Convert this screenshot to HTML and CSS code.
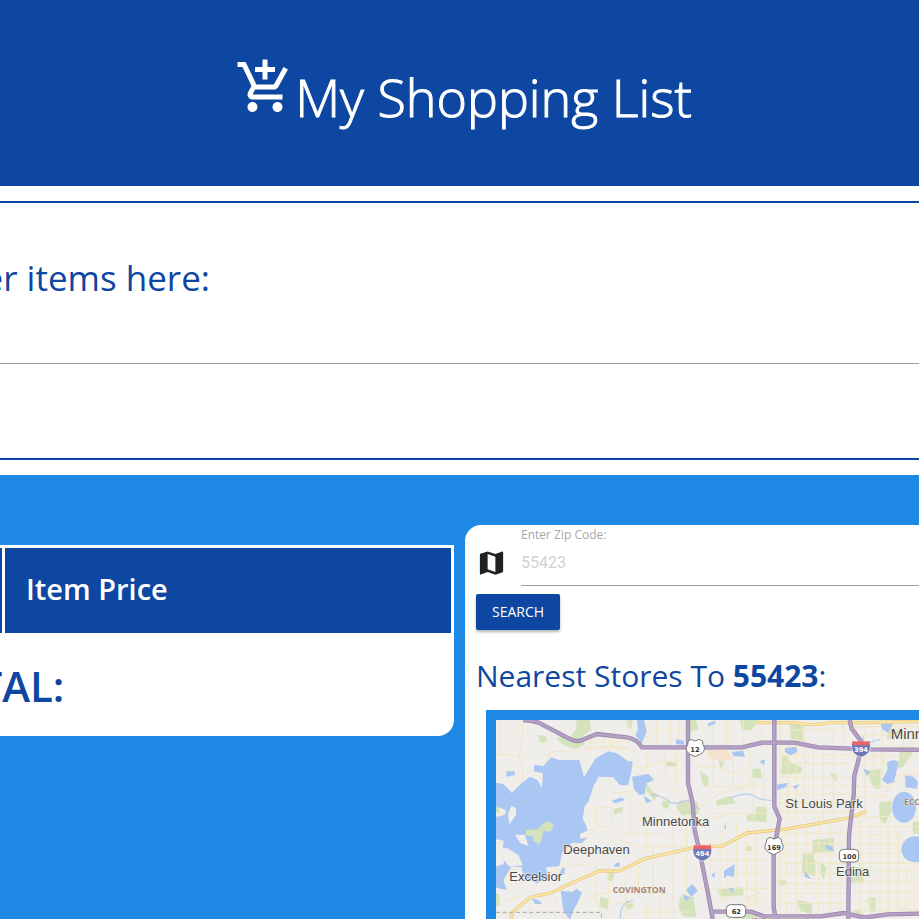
FILE: index.html
```html
<!DOCTYPE html>
<html lang="en">
<head>
<meta charset="utf-8">
<meta name="viewport" content="width=device-width, initial-scale=1">
<title>My Shopping List</title>
<link rel="stylesheet" href="styles.css">
</head>
<body>
<header class="banner">
  <svg class="cart" viewBox="0 0 24 24" aria-hidden="true"><path d="M11 9h2V6h3V4h-3V1h-2v3H8v2h3v3zm-4 9c-1.1 0-1.99.9-1.99 2S5.9 22 7 22s2-.9 2-2-.9-2-2-2zm10 0c-1.1 0-1.99.9-1.99 2s.89 2 1.99 2 2-.9 2-2-.9-2-2-2zm-9.83-3.25l.03-.12.9-1.63h7.45c.75 0 1.41-.41 1.75-1.03l3.86-7.01L19.42 4h-.01l-1.1 2-2.76 5H8.53l-.13-.27L6.16 6l-.95-2-.94-2H1v2h2l3.6 7.59-1.35 2.45c-.16.28-.25.61-.25.96 0 1.1.9 2 2 2h12v-2H7.42c-.13 0-.25-.11-.25-.25z"/></svg>
  <h1>My Shopping List</h1>
</header>
<section class="entry">
  <label class="entry-label" for="item"><span>Enter items here:</span></label>
  <input class="line-input" id="item" type="text">
</section>
<main class="content">
  <section class="list">
    <table>
      <thead><tr><th scope="col">Item Name</th><th scope="col">Item Price</th></tr></thead>
      <tbody><tr><td colspan="2">TOTAL:</td></tr></tbody>
    </table>
  </section>
  <section class="stores">
    <form class="zip">
      <svg class="map-icon" viewBox="0 0 24 24" aria-hidden="true"><path d="M20.5 3l-.16.03L15 5.1 9 3 3.36 4.9c-.21.07-.36.25-.36.48V20.5c0 .28.22.5.5.5l.16-.03L9 18.9l6 2.1 5.64-1.9c.21-.07.36-.25.36-.48V3.5c0-.28-.22-.5-.5-.5zM15 19l-6-2.11V5l6 2.11V19z"/></svg>
      <div class="zip-field">
        <label for="zip">Enter Zip Code:</label>
        <input class="line-input" id="zip" type="text" placeholder="55423">
      </div>
      <button type="button">SEARCH</button>
    </form>
    <h2>Nearest Stores To <b>55423</b>:</h2>
    <div class="map">
      <svg viewBox="48 60 1269 597" preserveAspectRatio="xMinYMin slice" role="img" aria-label="Map of nearby stores">
        <rect class="land" x="48" y="60" width="1269" height="597"/>
        <g class="park">
          <path d="M290 60h40l4 30-26 18 6 26-30 14-34-14-20-16 16-14 24 8 18-24zM172 104l26 4 2 18-18 4zM600 300l54 6 2 36-50 4-18-26zM500 250l14 20 20 14-10 18-26-30zM548 302h24l-8 26-18-8zM560 184l28 4v12l-30-2zM400 328l28-8v16l-26 8zM600 590l40 0 8 60h-40l-12-30zM440 600l22 16-14 14-14-10zM362 590l24 8-4 30-24-10zM384 515l18 6-4 24-16-6zM48 580l10 4v34H48zM48 310l10 6v26l-10-6zM618 60h30l8 26-30 14zM532 558l26 18-10 8zM438 60h20l-4 30-14-12z"/>
          <path d="M930 70h40l0 54-38-8zM906 172l16-8 8 20 38 20-4 16-60 4zM800 346l26-4 2-22 32 0v46l-60-2zM998 420l64-6 0 42-64 2zM968 458h32l6 34 0 36-40-8zM1024 486l16 18-10 36-10-22zM1110 502h40l0 48-40 0zM1160 214l42-8 0 60-20 0zM1197 306l36-4 2 30-20 40-16-14zM1164 590l24 4-2 44-18-6zM950 600l46 8 0 34-34-8zM710 568l80-6 0 24-70 4zM710 300l40-12 20 22-60 8zM715 176l20 14-14 16zM660 212l26 20-2 32-16-10zM816 206l26 0 4 30-30-4zM780 60h56l-20 30-30 0zM1260 140l50 0-40 60-16 6zM1228 80l30 14-18 26-20-6zM1050 220l16 0 6 24-14-6zM760 640l40-14 40 30-80 0zM1085 646l50-16 36 26zM894 538l26 6-6 12-18-2zM796 438l18 0 0 16-18-2zM1298 365h19v36h-19z"/>
        </g>
        <path class="urban" d="M680 140l60 10 20 28-34 6-44-12z"/>
        <g class="minor">
          <path d="M48 165h76M60 60v106M128 60v60l-12 46 12 30v50M85 105l30-14M196 188l16-32 60-4 60-6 60-8 70 14M330 108v42M348 108v38M370 108v40M392 108v40M415 110v46M320 126h130M320 142h120M350 322h44v58h-44zM396 280l60-6 60 6 50 20M450 278v124M480 300v66M500 350v108M520 440v142M455 400h90M560 440h100M580 350v260M620 340v250M640 180h-80l-60 20M500 160v46M555 150v70M590 150v100M530 60v80M570 60v80M600 60l-4 80M510 90h110M60 340l40 10 0 70M48 430l50-10M300 440l50-60M200 520l60-20 80-10M340 515l50-90 60-30M345 520v80l30 50M385 500l0 120M400 610h60M440 570v87M475 470v110M330 590l80-20 160 14M470 636h150M500 610v47M540 590v67M580 580v77M225 590v67M60 610l60-20M150 600v57M48 640h46M60 560l40-50 60-20M420 420l60 20 100 0M440 60l12 34 60 20"/>
          <path d="M480 200l30 30 50 30 50 30 30 50M440 200h60M648 200h60l50 20 40-12M670 260h90l80-6M660 320l60-40 80-20M700 60v200M740 60v120M760 160v140M790 60v90M810 150v120M820 210v180M846 60v80M850 200v110M680 340h180M660 360l80-14M720 380v220M744 450v110M690 410v110M770 370v180M800 380v260M830 390v240M680 480h180M700 520h150M660 565h210M716 600l40-10 20-40M800 560l40 20-40 14 50 10-40 10M900 60v590M925 130v230M950 100v260M975 60v300M1000 120v240M1030 140v220M1060 80v280M1090 60v90M910 90h200M900 165h220M900 190h210M900 232h220M900 258h210M900 282h210M900 310h210M900 336h210M920 380v260M950 370v280M980 370v200M1016 340v300M1050 350v300M1080 350v290M900 400h210M900 430h200M900 462h200M900 490h210M900 520h200M900 550h200M900 580h210M900 610h220"/>
          <path d="M1130 60v60M1155 60v300M1180 60v160M1206 60v160M1238 60v80M1270 60v80M1295 60v80M1120 80h197M1120 105h197M1120 170h190M1120 195h100M1116 225h200M1116 260h120M1116 290h120M1116 350h201M1116 380h201M1116 405h150M1116 430h150M1120 460h140M1120 490h197M1120 515h197M1120 545h197M1120 575h197M1120 605h197M1120 630h197M1140 360v280M1170 360v280M1200 360v280M1225 370v270M1255 400v240M1280 490v140M1305 490v140M1240 390l77 80M1180 310l60-60 77-40M1155 150l90 50 72 70"/>
        </g>
        <g class="water">
          <path d="M190 198l24-26 24 8 60 0 14 52 34-56 38-22 26 6 34 24 14 0-4 32-10 40-24 0-20-24-44-2-16 30-10 40-16 18-6 38 10 20 8 30-20 24-30-2-30 30-8 40-40 4 6 30-34 18-40-20-6-30-30 0-24 40 10 30-40-8-20-24 12-34 40-12-6-44 14-60-6-40 12-60 40-40 24-18 22 10 14 24z"/>
          <path d="M48 248l22 4 24 24 2 40-18 14-30-10zM48 350l30-6 20 10 0 26-20 44-30-6zM80 214h24v12l-26 4zM162 194l28 4v22l-28-6zM470 60h22l8 34-14 36-20-24 8-20zM456 230l50-8 16 18-22 10-6 32-16 4-16-20zM395 302l30-10 10 8-30 10zM490 286l26 18-18 6zM588 118l24 4v12l-24-2zM636 552l18 20-20 18-16-20zM606 582l26 10-14 12zM242 572l34 4 14-10 16 12-16 36-10 16-10 30-20-28zM154 596l22 4 10 12-20 0zM410 488l10 0-2 14-18-4zM246 504l8 0v18h-16z"/>
          <path d="M684 70l20-8 4 8-22 10zM755 156l34-4 6 18-34-2zM838 184l18-6-4 18zM916 144l32-4 4 16-20 10-18-10zM890 254l34-6-6 14-26 8zM938 260l20-8-10 16zM732 384l6-18 0 22zM732 512l32-20-2 40-20-6-10 10zM694 524l10-8 0 20zM745 565l16 0 0 14zM974 512l20 26-20-8zM1038 434l20 6 0 14-20-8zM1150 206l20 8-10 14zM1202 70l36 2-14 26-18-10zM1222 186l20-6 14 6-14 60-20 6-16-12 16-30zM1276 226l24 4 14 16-4 20-34-4z"/>
          <ellipse cx="1272" cy="322" rx="36" ry="46"/><ellipse cx="1306" cy="448" rx="42" ry="39"/>
        </g>
        <path class="stream" d="M512 282q40 8 54 22t60-4l34 30M750 295q50-22 70-8t54 14M460 602q-40 0-40 55M1150 110q-10 30 50 8"/>
        <g class="land">
          <path d="M358 236l20 8 10-6 6 14-14 12-20 6-26 50-8-18 16-46zM104 404l30 0 12 34-24-8zM300 402l30-14 0 22-30 6zM94 318l14 6 0 20-20 30-4-32zM62 440l24 6 30 20 12 30-40 4-20-24z"/>
        </g>
        <path class="park" d="M138 390l36-2 16-18 20-6 12 14-12 18-20-4-4 22-8 20-16-10-4-14-20-4z"/>
        <path class="yellow-edge" d="M94 657l4-20 50-44 70-16 70-34 70-30 60 0 80-38 162-36h66l74-40 120-12 180-32 60-20M830 68h110q60 12 110 0h110l157-4"/>
        <path class="yellow" d="M94 657l4-20 50-44 70-16 70-34 70-30 60 0 80-38 162-36h66l74-40 120-12 180-32 60-20M830 68h110q60 12 110 0h110l157-4"/>
        <path class="highway-edge" d="M130 60q30 2 50 10l92 48q20 10 40 0l38-16 90 10q30 4 46 30h300l60-14h98l70 14 160 6 153 2M624 60v190q10 40 14 60l6 80 16 70 24 120 14 77M883 60v260l16 36-10 54-8 30v180l6 37M1109 60l6 26 30 40q-4 40-22 100l-2 60-14 120-2 251M690 635h122l40 14h170l70-10 60 14 70-10 95-2"/>
        <path class="highway" d="M130 60q30 2 50 10l92 48q20 10 40 0l38-16 90 10q30 4 46 30h300l60-14h98l70 14 160 6 153 2M624 60v190q10 40 14 60l6 80 16 70 24 120 14 77M883 60v260l16 36-10 54-8 30v180l6 37M1109 60l6 26 30 40q-4 40-22 100l-2 60-14 120-2 251M690 635h122l40 14h170l70-10 60 14 70-10 95-2"/>
        <path class="boundary" d="M48 637h316v20"/>
        <g class="shield">
          <path d="M624 124l10-6 12 5 12-5 10 6q-1 10 5 18 2 14-12 20l-16 8-16-8q-14-8-10-20 6-8 5-18z"/>
          <path d="M860 418l10-6 12 5 12-5 10 6q-1 10 5 18 2 14-12 20l-16 8-16-8q-14-8-10-20 6-8 5-18z"/>
          <rect x="1078" y="448" width="58" height="38" rx="12"/>
          <rect x="739" y="614" width="58" height="38" rx="12"/>
        </g>
        <g class="interstate"><path d="M1118 124q26 6 50 0 6 14 2 26-6 16-27 22-21-6-27-22-4-12 2-26zM642 436q26 6 50 0 6 14 2 26-6 16-27 22-21-6-27-22-4-12 2-26z"/></g>
        <path class="interstate-top" d="M1118 122q10 4 14 2h22q4 2 14-2l2 13h-54zM642 434q10 4 14 2h22q4 2 14-2l2 13h-54z"/>
        <g class="route"><text x="645" y="156">12</text><text x="882" y="450">169</text><text x="1108" y="476">100</text><text x="769" y="642">62</text></g>
        <g class="route light"><text x="1143" y="157">394</text><text x="667" y="468">494</text></g>
        <g class="town"><text x="88" y="543">Excelsior</text><text x="250" y="462">Deephaven</text><text x="486" y="378">Minnetonka</text><text x="916" y="324">St Louis Park</text><text x="1068" y="528">Edina</text><text class="city" x="1232" y="117">Minneapolis</text></g>
        <g class="district"><text x="398" y="578">COVINGTON</text><text x="1272" y="314">ECCO</text><text x="814" y="672">INDIAN HILLS</text></g>
      </svg>
    </div>
  </section>
</main>
</body>
</html>
```
FILE: styles.css
```css
* { box-sizing: border-box; }
body {
  margin: 0;
  min-height: 100vh;
  display: flex;
  flex-direction: column;
  overflow: hidden;
  background: #fff;
  color: #0d47a1;
  font-family: "Open Sans", "Noto Sans", sans-serif;
}
h1, h2 { margin: 0; }
.banner {
  display: flex;
  justify-content: center;
  align-items: flex-start;
  padding: 57px 0 49px 8px;
  background: #0d47a1;
  color: #fff;
}
.cart { width: 60px; height: 60px; fill: #fff; }
.banner h1 {
  font-size: 52px;
  font-weight: 300;
  line-height: 80px;
  -webkit-text-stroke: 1px #fff;
}
.entry {
  margin: 15px 0;
  padding: 50px 0 94px;
  border: solid #0d47a1;
  border-width: 2px 0;
}
.entry-label {
  display: flex;
  justify-content: flex-end;
  width: 210px;
  font-size: 35px;
  line-height: 50px;
  white-space: nowrap;
}
.line-input {
  display: block;
  width: 100%;
  padding: 0;
  border: 0;
  border-bottom: 1px solid #9e9e9e;
  outline: 0;
  background: transparent;
  font: 16px Roboto, sans-serif;
}
.entry .line-input { height: 61px; }
.content {
  flex: 1;
  display: flex;
  align-items: flex-start;
  gap: 11px;
  padding-top: 50px;
  background: #1e88e5;
}
.list {
  flex: 0 0 454px;
  display: flex;
  justify-content: flex-end;
  margin-top: 20px;
  overflow: hidden;
  border-radius: 0 0 16px 0;
}
table {
  flex: none;
  width: 938px;
  table-layout: fixed;
  border-collapse: collapse;
  background: #fff;
}
th {
  height: 88px;
  padding: 0 21px 4px;
  border: 3px solid #fff;
  background: #0d47a1;
  color: #fff;
  font-size: 29px;
  font-weight: 600;
  text-align: left;
}
th:first-child { width: 486px; }
td {
  height: 101px;
  padding: 0 0 0 16px;
  font-size: 42px;
  font-weight: 600;
  text-align: center;
}
.stores {
  flex: 1;
  min-width: 0;
  align-self: stretch;
  padding-left: 11px;
  border-radius: 16px 0 0 0;
  background: #fff;
}
.zip {
  display: grid;
  grid-template-columns: 32px 1fr;
  column-gap: 13px;
  row-gap: 8px;
}
.map-icon { width: 31px; height: 32px; margin-top: 22px; fill: #212121; }
.zip-field label {
  display: block;
  color: #a8a8a8;
  font-size: 12px;
  line-height: 20px;
}
.zip-field .line-input { height: 41px; padding-bottom: 6px; }
.zip-field .line-input::placeholder { color: #d1d1d1; opacity: 1; }
button {
  grid-column: 1 / -1;
  justify-self: start;
  height: 36px;
  padding: 0 16px;
  border: 0;
  border-radius: 2px;
  background: #0d47a1;
  color: #fff;
  box-shadow: 0 2px 3px rgba(0, 0, 0, .3);
  font: 14px/36px "Open Sans", sans-serif;
}
h2 { margin-top: 22px; font-size: 30px; font-weight: 400; line-height: 48px; white-space: nowrap; }
h2 b { font-weight: 700; }
.map {
  margin: 10px 0 0 10px;
  border: solid #1e88e5;
  border-width: 10px 0 0 10px;
}
.map svg { display: block; width: 100%; }
.land { fill: #efeeea; }
.park { fill: #d5e3bd; }
.urban { fill: #f5e2cf; }
.water { fill: #aac6f3; }
.minor { fill: none; stroke: #f3e6c4; stroke-width: 3; }
.stream { fill: none; stroke: #aac6f3; stroke-width: 3; }
.yellow, .yellow-edge, .highway, .highway-edge { fill: none; stroke-linejoin: round; }
.yellow-edge { stroke: #eac889; stroke-width: 10; }
.yellow { stroke: #fae9a5; stroke-width: 5; }
.highway-edge { stroke: #9b86ae; stroke-width: 13; }
.highway { stroke: #b5a0c5; stroke-width: 8; }
.boundary { fill: none; stroke: #a9a9a9; stroke-width: 3; stroke-dasharray: 12 8; }
.shield { fill: #fff; stroke: #777; stroke-width: 3; }
.interstate { fill: #7079b8; stroke: #fff; stroke-width: 2; }
.interstate-top { fill: #ee6266; }
.route { fill: #333; font: 700 20px "DejaVu Sans", sans-serif; text-anchor: middle; }
.light { fill: #fff; }
.town { fill: #484848; stroke: #f5f5f3; stroke-width: 3; paint-order: stroke; font: 39px "Liberation Sans", sans-serif; }
.city { font-size: 45px; }
.district { fill: #a98672; stroke: #f5f5f3; stroke-width: 2; paint-order: stroke; font: 700 26px "Open Sans", sans-serif; }
```
